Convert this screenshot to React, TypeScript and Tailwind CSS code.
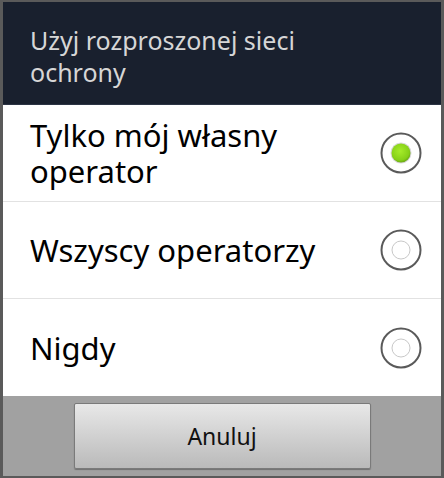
import React from "react";

type Option = {
  label: string;
  selected?: boolean;
};

const options: Option[] = [
  { label: "Tylko mój własny operator", selected: true },
  { label: "Wszyscy operatorzy" },
  { label: "Nigdy" },
];

function Radio({ selected }: { selected?: boolean }) {
  return (
    <svg width="42" height="42" viewBox="0 0 42 42">
      <defs>
        <radialGradient id="dot" cx="45%" cy="40%" r="60%">
          <stop offset="0%" stopColor="#a6ec2a" />
          <stop offset="80%" stopColor="#86d018" />
          <stop offset="100%" stopColor="#6aa812" />
        </radialGradient>
      </defs>
      <circle cx="21" cy="21" r="19.5" fill="#fff" stroke="#5a5a5a" strokeWidth="2" />
      {selected ? (
        <>
          <circle cx="21" cy="21" r="10.5" fill="#d8d8d8" />
          <circle cx="21" cy="21" r="9.5" fill="url(#dot)" />
        </>
      ) : (
        <circle cx="21" cy="21" r="9" fill="#fff" stroke="#c8c8c8" strokeWidth="1" />
      )}
    </svg>
  );
}

export default function App() {
  return (
    <div
      className="flex h-[478px] w-[444px] flex-col bg-[#5a5a5a] pb-[2px] pl-[3px] pr-[3px] pt-[2px]"
      style={{ fontFamily: '"Noto Sans", "Open Sans", sans-serif' }}
    >
      <div className="h-[103px] shrink-0 border-b border-[#2c3444] bg-[#19202e] pl-[27px] pr-4 pt-[22px]">
        <h1 className="text-[25px] leading-[32px] text-[#d6d6d6]">
          Użyj rozproszonej sieci
          <br />
          ochrony
        </h1>
      </div>

      <ul className="flex flex-col bg-white">
        {options.map((option, i) => (
          <li
            key={option.label}
            className={`flex h-[97px] items-center justify-between pl-[27px] pr-[19px] ${
              i < options.length - 1 ? "border-b border-[#e2e2e2]" : ""
            }`}
          >
            <span className="max-w-[320px] text-[31px] leading-[36px] text-black">
              {option.label}
            </span>
            <Radio selected={option.selected} />
          </li>
        ))}
      </ul>

      <div className="flex flex-1 items-start justify-center bg-[#a1a1a1] pt-[7px]">
        <button className="h-[66px] w-[297px] rounded-[2px] border border-[#7a7a7a] bg-gradient-to-b from-[#e8e8e8] to-[#bababa] text-[23px] text-[#111] shadow-[0_1px_1px_rgba(0,0,0,0.3)]">
          Anuluj
        </button>
      </div>
    </div>
  );
}
